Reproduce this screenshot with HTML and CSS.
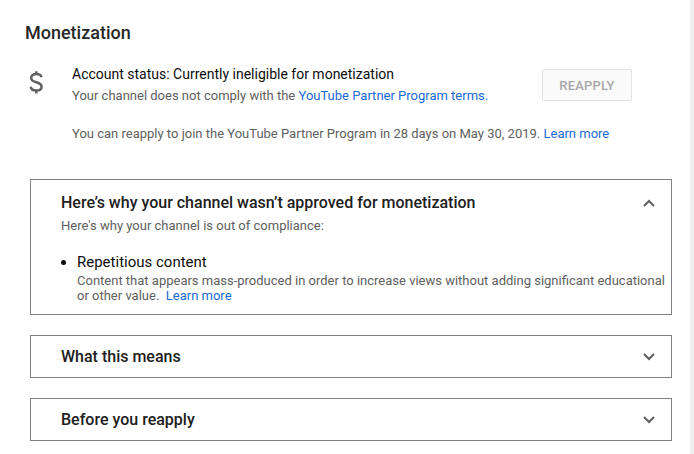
FILE: index.html
```html
<!DOCTYPE html>
<html>
<head>
<meta charset="utf-8">
<link rel="stylesheet" href="styles.css">
</head>
<body>
<div class="page">
  <main class="main">
    <h1 class="title">Monetization</h1>
    <section class="status">
      <div class="status-icon">
        <svg width="18" height="26" viewBox="0 0 18 26"><path d="M14.5 7.2C14 5.2 12.3 4 9.3 4C6.3 4 4.2 5.6 4.2 8C4.2 10.6 6.4 11.5 9.4 12.3C12.4 13.1 14.6 14.1 14.6 16.8C14.6 19.1 12.6 20.6 9.3 20.6C6.2 20.6 4.1 19.3 3.7 16.8M9.3 1.2V4M9.3 20.6V23.6" fill="none" stroke="#606060" stroke-width="2.5"/></svg>
      </div>
      <div class="status-body">
        <div class="status-top">
          <div class="status-text">
            <div class="status-title">Account status: Currently ineligible for monetization</div>
            <div class="status-sub">Your channel does not comply with the <a class="link">YouTube Partner Program terms.</a></div>
          </div>
          <button class="reapply">Reapply</button>
        </div>
        <div class="status-note">You can reapply to join the YouTube Partner Program in 28 days on May 30, 2019. <a class="link">Learn more</a></div>
      </div>
    </section>

    <section class="panel">
      <div class="panel-head">
        <div class="panel-title">Here’s why your channel wasn’t approved for monetization</div>
        <svg class="chev" width="12" height="8" viewBox="0 0 12 8"><path d="M1 7L6 2L11 7" fill="none" stroke="#606060" stroke-width="2"/></svg>
      </div>
      <div class="panel-body">
        <div class="panel-sub">Here's why your channel is out of compliance:</div>
        <ul class="reasons">
          <li class="reason">
            <div class="reason-title">Repetitious content</div>
            <div class="reason-desc">Content that appears mass-produced in order to increase views without adding significant educational or other value.&nbsp; <a class="link">Learn more</a></div>
          </li>
        </ul>
      </div>
    </section>

    <section class="panel collapsed">
      <div class="panel-head">
        <div class="panel-title">What this means</div>
        <svg class="chev" width="12" height="8" viewBox="0 0 12 8"><path d="M1 1L6 6L11 1" fill="none" stroke="#606060" stroke-width="2"/></svg>
      </div>
    </section>

    <section class="panel collapsed">
      <div class="panel-head">
        <div class="panel-title">Before you reapply</div>
        <svg class="chev" width="12" height="8" viewBox="0 0 12 8"><path d="M1 1L6 6L11 1" fill="none" stroke="#606060" stroke-width="2"/></svg>
      </div>
    </section>
  </main>
  <div class="scrollbar"></div>
</div>
</body>
</html>
```
FILE: styles.css
```css
html, body {
  margin: 0;
  padding: 0;
  background: #fff;
}
body {
  font-family: Roboto, "Liberation Sans", Arial, sans-serif;
  color: #0d0d0d;
}
.page {
  display: flex;
  height: 454px;
  overflow: hidden;
}
.main {
  flex: 1;
  padding: 21px 0 0 0;
}
.scrollbar {
  width: 4px;
  background: #f0f0f0;
}
.title {
  margin: 0 0 0 25px;
  font-size: 18px;
  line-height: 24px;
  font-weight: 500;
  color: #282828;
}
.status {
  display: flex;
  margin-top: 19px;
  padding-left: 27px;
}
.status-icon {
  width: 45px;
  padding-top: 6px;
}
.status-body {
  flex: 0 0 560px;
}
.status-top {
  display: flex;
  justify-content: space-between;
  align-items: flex-start;
}
.status-title {
  font-size: 14px;
  line-height: 20px;
  color: #0d0d0d;
}
.status-sub {
  font-size: 13px;
  line-height: 20px;
  margin-top: 2px;
  color: #606060;
}
.link {
  color: #1a6ad6;
  text-decoration: none;
}
.reapply {
  margin-top: 5px;
  width: 90px;
  height: 32px;
  border: 1px solid #e3e3e3;
  border-radius: 2px;
  background: #fafafa;
  color: #a8a8a8;
  font-family: inherit;
  font-size: 13px;
  font-weight: 500;
  text-transform: uppercase;
  letter-spacing: 0.2px;
  padding: 0;
}
.status-note {
  margin-top: 18px;
  font-size: 13px;
  line-height: 20px;
  color: #606060;
}
.panel {
  margin: 35px 0 0 30px;
  width: 640px;
  border: 1px solid #808080;
}
.panel.collapsed {
  margin-top: 20px;
}
.panel-head {
  display: flex;
  justify-content: space-between;
  align-items: center;
  height: 41px;
  padding: 0 16px 0 30px;
  box-sizing: border-box;
}
.panel:not(.collapsed) .panel-head {
  height: 44px;
  padding-top: 2px;
}
.panel-title {
  font-size: 16px;
  line-height: 20px;
  font-weight: 500;
  color: #202020;
}
.panel-body {
  padding: 0 6px 11px 30px;
  margin-top: -7px;
}
.panel-sub {
  font-size: 13px;
  line-height: 18px;
  color: #606060;
}
.reasons {
  margin: 18px 0 0 0;
  padding: 0 0 0 16px;
}
.reason {
  list-style: disc;
  font-size: 15px;
  line-height: 18px;
}
.reason-title {
  font-size: 15px;
  line-height: 18px;
  color: #0d0d0d;
}
.reason-desc {
  margin-top: 2px;
  font-size: 13px;
  line-height: 15px;
  color: #606060;
}
```
